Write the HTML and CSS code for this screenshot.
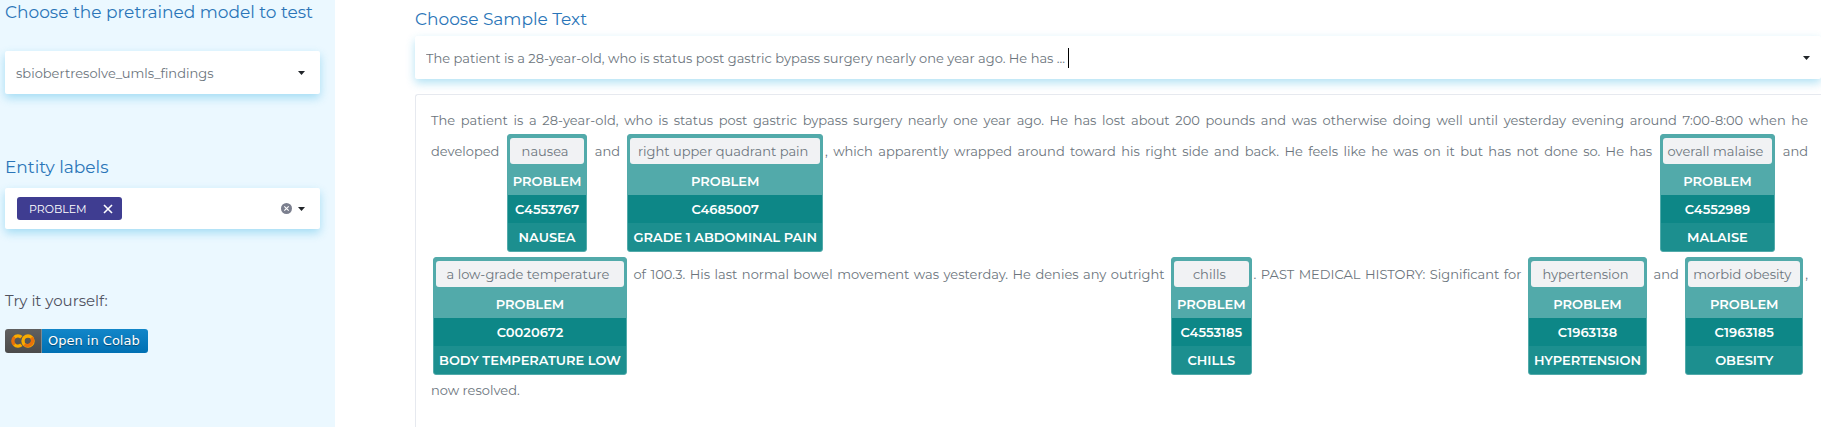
FILE: index.html
```
<!DOCTYPE html>
<html lang="en">
<head>
  <meta charset="UTF-8" />
  <meta name="viewport" content="width=device-width, initial-scale=1.0" />
  <title>Entity Resolver Demo</title>
  <link rel="stylesheet" href="styles.css">
</head>
<body>
  <!-- Sidebar -->
  <aside class="sidebar">
    <label class="title" for="model">Choose the pretrained model to test</label>
    <div class="field model">
      <select id="model">
        <option>sbiobertresolve_umls_findings</option>
      </select>
      <svg class="arrow" viewBox="0 0 7 4"><path d="M0 0h7L3.5 4z" /></svg>
    </div>

    <h2 class="title">Entity labels</h2>
    <div class="field labels">
      <span class="tag">PROBLEM
        <button type="button" aria-label="Remove PROBLEM">
          <svg viewBox="0 0 10 10"><path d="M1 1l8 8M9 1l-8 8" /></svg>
        </button>
      </span>
      <button class="clear" type="button" aria-label="Clear all">
        <svg viewBox="0 0 10 10"><circle cx="5" cy="5" r="5" /><path d="M3 3l4 4M7 3l-4 4" /></svg>
      </button>
      <svg class="arrow" viewBox="0 0 7 4"><path d="M0 0h7L3.5 4z" /></svg>
    </div>

    <p class="try">Try it yourself:</p>
    <a class="colab" href="#">
      <span class="colab-logo">
        <svg viewBox="0 0 24 14">
          <g fill="none" stroke-width="3.4">
            <path stroke="#f9ab00" d="M10.4 3.2A5 5 0 0 0 3.4 3.4" />
            <path stroke="#e8710a" d="M3.6 3.2A5 5 0 0 0 3.6 10.8" />
            <path stroke="#f9ab00" d="M3.4 10.6A5 5 0 0 0 10.4 10.8" />
            <circle stroke="#f9ab00" cx="17" cy="7" r="5" />
            <path stroke="#e8710a" d="M20.5 3.5A5 5 0 0 1 13.5 10.5" />
          </g>
        </svg>
      </span>
      <span class="colab-text">Open in Colab</span>
    </a>
  </aside>

  <!-- Main content -->
  <main>
    <label class="title" for="sample">Choose Sample Text</label>
    <div class="field sample">
      <select id="sample">
        <option>The patient is a 28-year-old, who is status post gastric bypass surgery nearly one year ago. He has ...</option>
      </select>
      <span class="caret"></span>
      <svg class="arrow" viewBox="0 0 7 4"><path d="M0 0h7L3.5 4z" /></svg>
    </div>

    <div class="result">
      The patient is a 28-year-old, who is status post gastric bypass surgery nearly one year ago. He has lost about 200 pounds and was otherwise doing well until yesterday evening around 7:00-8:00 when he developed&nbsp;<span class="entity"><span class="chunk">nausea</span><b>PROBLEM</b><b class="code">C4553767</b><b class="name">NAUSEA</b></span>
      and
      <span class="entity"><span class="chunk">right upper quadrant pain</span><b>PROBLEM</b><b class="code">C4685007</b><b class="name">GRADE 1 ABDOMINAL PAIN</b></span>, which apparently wrapped around toward his right side and back. He feels like he was on it but has not done so. He has
      <span class="entity"><span class="chunk">overall malaise</span><b>PROBLEM</b><b class="code">C4552989</b><b class="name">MALAISE</b></span>
      and
      <span class="entity"><span class="chunk">a low-grade temperature</span><b>PROBLEM</b><b class="code">C0020672</b><b class="name">BODY TEMPERATURE LOW</b></span>
      of 100.3. His last normal bowel movement was yesterday. He denies any outright
      <span class="entity"><span class="chunk">chills</span><b>PROBLEM</b><b class="code">C4553185</b><b class="name">CHILLS</b></span>. PAST MEDICAL HISTORY: Significant for
      <span class="entity"><span class="chunk">hypertension</span><b>PROBLEM</b><b class="code">C1963138</b><b class="name">HYPERTENSION</b></span>
      and
      <span class="entity"><span class="chunk">morbid obesity</span><b>PROBLEM</b><b class="code">C1963185</b><b class="name">OBESITY</b></span>, now resolved.
    </div>
  </main>
</body>
</html>
```
FILE: styles.css
```
* {
  box-sizing: border-box;
}

body {
  display: flex;
  min-height: 100vh;
  margin: 0;
  overflow-x: hidden;
  background: #fff;
  color: #6c757d;
  font-family: Montserrat, Inter, sans-serif;
  font-size: 13px;
  font-weight: 400;
}

button {
  display: flex;
  padding: 0;
  border: 0;
  background: none;
  cursor: pointer;
}

.title {
  display: block;
  margin: 0;
  color: #2a75b8;
  font-size: 17px;
  font-weight: 400;
  line-height: 24px;
}

.sidebar {
  flex: none;
  width: 335px;
  padding: 0 15px 0 5px;
  background: #ebf8ff;
}

main {
  display: flex;
  flex: 1;
  flex-direction: column;
  min-width: 0;
  padding: 7px 0 0 80px;
}

/* Dropdowns */
.field {
  display: flex;
  align-items: center;
  height: 43px;
  padding: 0 15px 0 11px;
  border-radius: 2px;
  background: #fff;
  box-shadow: 0 4px 10px rgba(0, 160, 220, 0.3);
}

.field select {
  appearance: none;
  padding: 0;
  border: 0;
  outline: 0;
  background: none;
  color: inherit;
  font: inherit;
}

.arrow {
  width: 7px;
  height: 4px;
  margin-left: auto;
  fill: #212529;
}

.model {
  margin: 27px 0 61px;
}

.sample {
  margin: 5px 0 15px;
  padding-right: 11px;
}

.caret {
  width: 1px;
  height: 20px;
  margin-left: 2px;
  background: #000;
}

.labels {
  height: 41px;
  margin: 9px 0 60px;
  padding-left: 12px;
}

.tag {
  display: flex;
  align-items: center;
  gap: 16px;
  height: 23px;
  padding: 0 9px 0 12px;
  border-radius: 3px;
  background: #3f3d91;
  color: #fff;
  font-size: 11px;
}

.tag svg {
  width: 10px;
  height: 10px;
  stroke: #fff;
  stroke-width: 1.6;
}

.clear {
  margin-left: auto;
}

.clear svg {
  width: 11px;
  height: 11px;
  fill: #7b7f8e;
  stroke: #fff;
}

.clear circle {
  stroke: none;
}

.clear + .arrow {
  margin-left: 6px;
}

.try {
  margin: 0 0 16px;
  color: #50535f;
  font-size: 15px;
  line-height: 24px;
}

/* Colab badge */
.colab {
  display: inline-flex;
  height: 24px;
  border-radius: 3px;
  overflow: hidden;
  color: #fff;
  font: 13px/24px "DejaVu Sans", sans-serif;
  text-decoration: none;
  text-shadow: 0 1px 1px rgba(0, 0, 0, 0.4);
}

.colab-logo {
  display: flex;
  align-items: center;
  width: 37px;
  padding-left: 6px;
  border-right: 1px solid #7d8a91;
  background: linear-gradient(#606060, #4b4b4b);
}

.colab-logo svg {
  width: 24px;
  height: 14px;
}

.colab-text {
  padding: 0 8px 0 6px;
  background: linear-gradient(#1286c9, #0070b3);
}

/* Annotated text */
.result {
  flex: 1;
  padding: 13px 13px 0 15px;
  border: 1px solid #e6e9ef;
  border-width: 1px 0 0 1px;
  border-radius: 3px 0 0 0;
  line-height: 24px;
  text-align: justify;
}

.entity {
  display: inline-flex;
  flex-direction: column;
  margin: 2px 2px 3px;
  border: 1px solid #52aaaa;
  border-radius: 3px;
  background: #52aaaa;
  color: #fff;
  line-height: 28px;
  text-align: center;
}

.entity b {
  padding: 0 5px;
  font-weight: 600;
}

.entity .chunk {
  margin: 3px 2px;
  padding: 0 9px 0 5px;
  border-radius: 3px;
  background: #f1f2f4;
  color: #6c757d;
  line-height: 26px;
}

.entity .code {
  background: #0d8787;
}

.entity .name {
  border-radius: 0 0 2px 2px;
  background: #1c8f8f;
}
```
